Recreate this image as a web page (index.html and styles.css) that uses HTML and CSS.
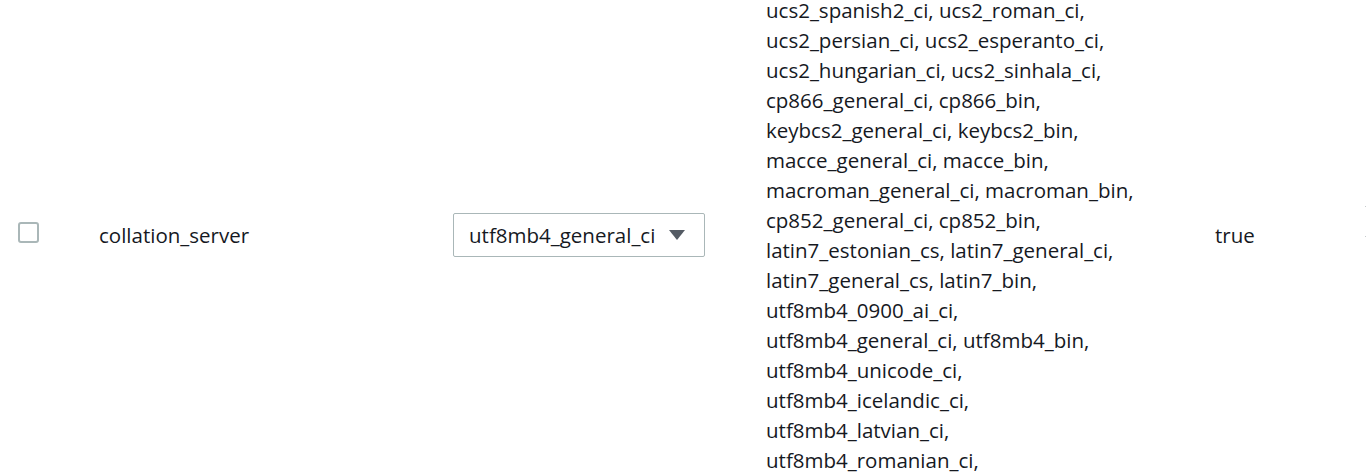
FILE: index.html
```html
<!DOCTYPE html>
<html lang="en">
<head>
<meta charset="utf-8">
<title>Parameters</title>
<link rel="stylesheet" href="styles.css">
</head>
<body>
<div class="table">
  <div class="row">
    <div class="cell cell-check"><span class="checkbox"></span></div>
    <div class="cell cell-name">collation_server</div>
    <div class="cell cell-value">
      <div class="select">
        <span class="select-text">utf8mb4_general_ci</span>
        <svg class="caret" width="18" height="12" viewBox="0 0 18 12"><path d="M1 1 H17 L9 11 Z" fill="#545b64"/></svg>
      </div>
    </div>
    <div class="cell cell-allowed">
      <span class="line">ucs2_spanish2_ci, ucs2_roman_ci,</span>
      <span class="line">ucs2_persian_ci, ucs2_esperanto_ci,</span>
      <span class="line">ucs2_hungarian_ci, ucs2_sinhala_ci,</span>
      <span class="line">cp866_general_ci, cp866_bin,</span>
      <span class="line">keybcs2_general_ci, keybcs2_bin,</span>
      <span class="line">macce_general_ci, macce_bin,</span>
      <span class="line">macroman_general_ci, macroman_bin,</span>
      <span class="line">cp852_general_ci, cp852_bin,</span>
      <span class="line">latin7_estonian_cs, latin7_general_ci,</span>
      <span class="line">latin7_general_cs, latin7_bin,</span>
      <span class="line">utf8mb4_0900_ai_ci,</span>
      <span class="line">utf8mb4_general_ci, utf8mb4_bin,</span>
      <span class="line">utf8mb4_unicode_ci,</span>
      <span class="line">utf8mb4_icelandic_ci,</span>
      <span class="line">utf8mb4_latvian_ci,</span>
      <span class="line">utf8mb4_romanian_ci,</span>
    </div>
    <div class="cell cell-modifiable">true</div>
    <div class="cell cell-next"><span class="edge"></span></div>
  </div>
</div>
</body>
</html>
```

FILE: styles.css
```css
html, body {
  margin: 0;
  padding: 0;
  background: #ffffff;
  overflow: hidden;
}
body {
  font-family: "Open Sans", "Liberation Sans", sans-serif;
  font-size: 20.5px;
  color: #16191f;
}
.table {
  margin-top: -5px;
}
.row {
  display: grid;
  grid-template-columns: 99px 354px 313px 449px 150px 1fr;
  align-items: center;
}
.cell-check {
  padding-left: 18px;
  display: flex;
  align-items: center;
  margin-top: -5px;
}
.checkbox {
  display: block;
  width: 17px;
  height: 17px;
  border: 2px solid #aab7b8;
  border-radius: 3px;
  background: #fff;
}
.cell-name {
  line-height: 30px;
}
.select {
  width: 252px;
  height: 44px;
  border: 1px solid #aab7b8;
  border-radius: 2px;
  display: flex;
  align-items: center;
  padding: 0 18px 0 15px;
  box-sizing: border-box;
  justify-content: space-between;
}
.select-text {
  white-space: nowrap;
}
.caret {
  display: block;
  flex: none;
}
.cell-allowed {
  display: flex;
  flex-direction: column;
  line-height: 30px;
  white-space: nowrap;
}
.cell-modifiable {
  line-height: 30px;
}
.cell-next {
  display: flex;
}
.edge {
  display: block;
  width: 1px;
  height: 29px;
  border-top: 1px solid #c6cccd;
  border-bottom: 1px solid #c6cccd;
  margin-top: -28px;
}
```
